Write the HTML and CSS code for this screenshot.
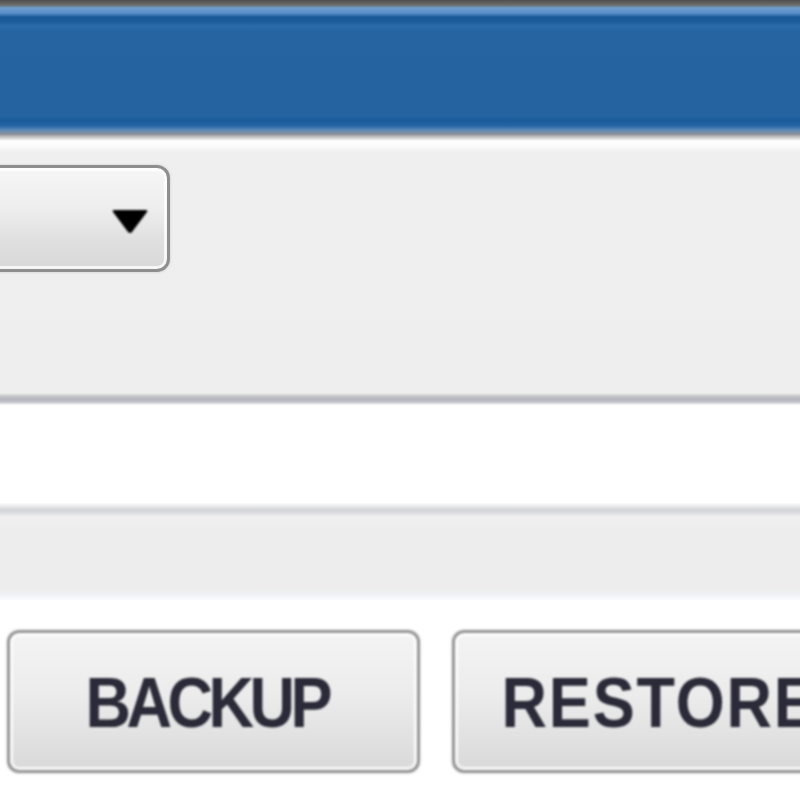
FILE: index.html
```html
<!DOCTYPE html>
<html>
<head>
<meta charset="utf-8">
<link rel="stylesheet" href="styles.css">
</head>
<body>
<div class="page">
  <header class="topbar"></header>
  <section class="toolbar">
    <div class="select">
      <svg class="arrow" width="40" height="30" viewBox="0 0 40 30">
        <path d="M4 4 L36 4 Q38 4 37 6 L22 26 Q20 28 18 26 L3 6 Q2 4 4 4 Z" fill="#000"/>
      </svg>
    </div>
  </section>
  <div class="divider dark"></div>
  <section class="blank"></section>
  <div class="divider light"></div>
  <section class="strip"></section>
  <section class="actions">
    <button class="btn"><span class="label backup">BACKUP</span></button>
    <button class="btn"><span class="label restore">RESTORE</span></button>
  </section>
</div>
</body>
</html>
```

FILE: styles.css
```css
html, body {
  margin: 0;
  padding: 0;
  background: #fff;
  overflow: hidden;
}
.page {
  width: 800px;
  height: 800px;
  display: flex;
  flex-direction: column;
  overflow: hidden;
  font-family: "Liberation Sans", Arial, sans-serif;
}
.topbar {
  height: 141px;
  flex-shrink: 0;
  background: linear-gradient(to bottom,
    #4f4f4f 0px, #6c6c6c 5px, #6f9dd0 8px, #5a8fc8 13px,
    #1b5a99 17px, #1c5b9a 21px, #2b6ba9 26px, #2564a1 32px,
    #2462a0 116px, #1b5b9c 121px, #2866a6 126px, #5d89b8 130px,
    #8b9097 134px, #c2c2c2 137px, #ffffff 141px);
}
.toolbar {
  height: 252px;
  flex-shrink: 0;
  background: linear-gradient(to bottom, #ffffff 0px, #fafafa 6px, #efefef 11px, #eeeeee 100%);
  display: flex;
  align-items: flex-start;
  padding-top: 24px;
  box-sizing: border-box;
}
.select {
  width: 224px;
  height: 107px;
  margin-left: -54px;
  box-sizing: border-box;
  border: 3px solid #8e8e8e;
  border-radius: 13px;
  background: linear-gradient(to bottom, #f6f6f6 0%, #eeeeee 40%, #dedede 75%, #d9d9d9 100%);
  box-shadow: inset 0 0 0 3px rgba(255,255,255,0.75), 0 0 3px rgba(0,0,0,0.15);
  display: flex;
  align-items: center;
  justify-content: flex-end;
  padding-right: 17px;
  filter: blur(0.7px);
}
.arrow {
  display: block;
  margin-top: 4px;
  filter: blur(0.9px);
}
.divider {
  flex-shrink: 0;
}
.divider.dark {
  height: 12px;
  background: linear-gradient(to bottom, #ececec 0px, #c9cace 3px, #b4b5bb 6px, #c4c5ca 9px, #fbfbfb 12px);
}
.blank {
  height: 98px;
  flex-shrink: 0;
  background: #ffffff;
}
.divider.light {
  height: 14px;
  background: linear-gradient(to bottom, #fbfbfb 0px, #e4e5e7 4px, #d3d4d7 7px, #dcdde0 10px, #f2f2f2 14px);
}
.strip {
  height: 83px;
  flex-shrink: 0;
  background: linear-gradient(to bottom, #f0f0f0 0px, #ededed 15px, #ededed 72px, #eef2f5 78px, #fbfcfd 83px);
}
.actions {
  display: flex;
  gap: 32px;
  padding: 30px 0 0 7px;
  flex-shrink: 0;
}
.btn {
  width: 413px;
  height: 143px;
  flex-shrink: 0;
  box-sizing: border-box;
  border: 3px solid #969696;
  border-radius: 12px;
  background: linear-gradient(to bottom, #f4f4f4 0%, #ececec 45%, #e0e0e0 80%, #d9d9d9 100%);
  box-shadow: inset 0 0 0 3px rgba(255,255,255,0.8), 0 0 3px rgba(0,0,0,0.15);
  display: flex;
  align-items: center;
  justify-content: center;
  padding: 0;
  margin: 0;
  font-family: "Liberation Sans", Arial, sans-serif;
  filter: blur(0.8px);
}
.label {
  display: inline-block;
  font-size: 70px;
  font-weight: bold;
  color: #2a2a38;
  line-height: 1;
  white-space: nowrap;
  transform: scaleX(0.9);
  margin-top: 2px;
}
.label.backup {
  letter-spacing: -5px;
  margin-right: 14px;
}
.label.restore {
  letter-spacing: 2px;
  margin-left: 2px;
}
```
